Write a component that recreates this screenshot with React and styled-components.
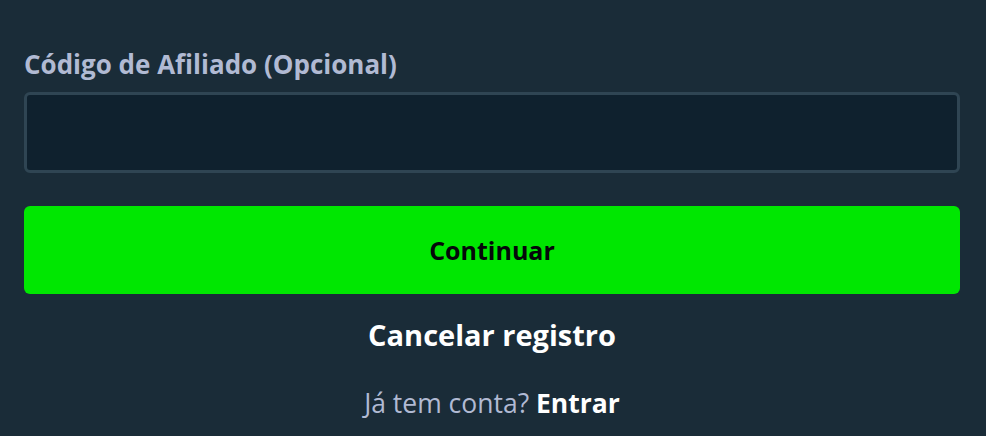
import React from "react"
import styled, { createGlobalStyle } from "styled-components"

const GlobalStyle = createGlobalStyle`
body {
  margin: 0;
  background: #1a2c38;
  font-family: "Open Sans", "Noto Sans", sans-serif;
}
`

const Form = styled.div`
width: 986px;
height: 436px;
box-sizing: border-box;
padding: 48px 26px 0 24px;
display: flex;
flex-direction: column;
background: #1a2c38;
overflow: hidden;
`

const Label = styled.label`
color: #b1bad3;
font-size: 26px;
font-weight: 700;
line-height: 32px;
margin-bottom: 12px;
`

const Input = styled.input`
height: 81px;
box-sizing: border-box;
background: #0f212e;
border: 3px solid #2f4553;
border-radius: 6px;
outline: none;
color: #fff;
font-size: 20px;
padding: 0 16px;
`

const PrimaryButton = styled.button`
margin-top: 33px;
height: 88px;
border: none;
border-radius: 6px;
background: #00e701;
color: #05080a;
font-family: inherit;
font-size: 25px;
font-weight: 700;
cursor: pointer;
`

const TextButton = styled.button`
margin-top: 22px;
background: none;
border: none;
color: #fff;
font-family: inherit;
font-size: 29px;
font-weight: 700;
line-height: 36px;
cursor: pointer;
`

const Footer = styled.div`
margin-top: 34px;
text-align: center;
color: #b1bad3;
font-size: 26.5px;
line-height: 30px;
`

const Link = styled.a`
color: #fff;
font-weight: 700;
cursor: pointer;
`

export default function App() {
    return (
        <>
            <GlobalStyle />
            <Form>
                <Label>Código de Afiliado (Opcional)</Label>
                <Input type="text" />
                <PrimaryButton>Continuar</PrimaryButton>
                <TextButton>Cancelar registro</TextButton>
                <Footer>
                    Já tem conta? <Link>Entrar</Link>
                </Footer>
            </Form>
        </>
    )
}
